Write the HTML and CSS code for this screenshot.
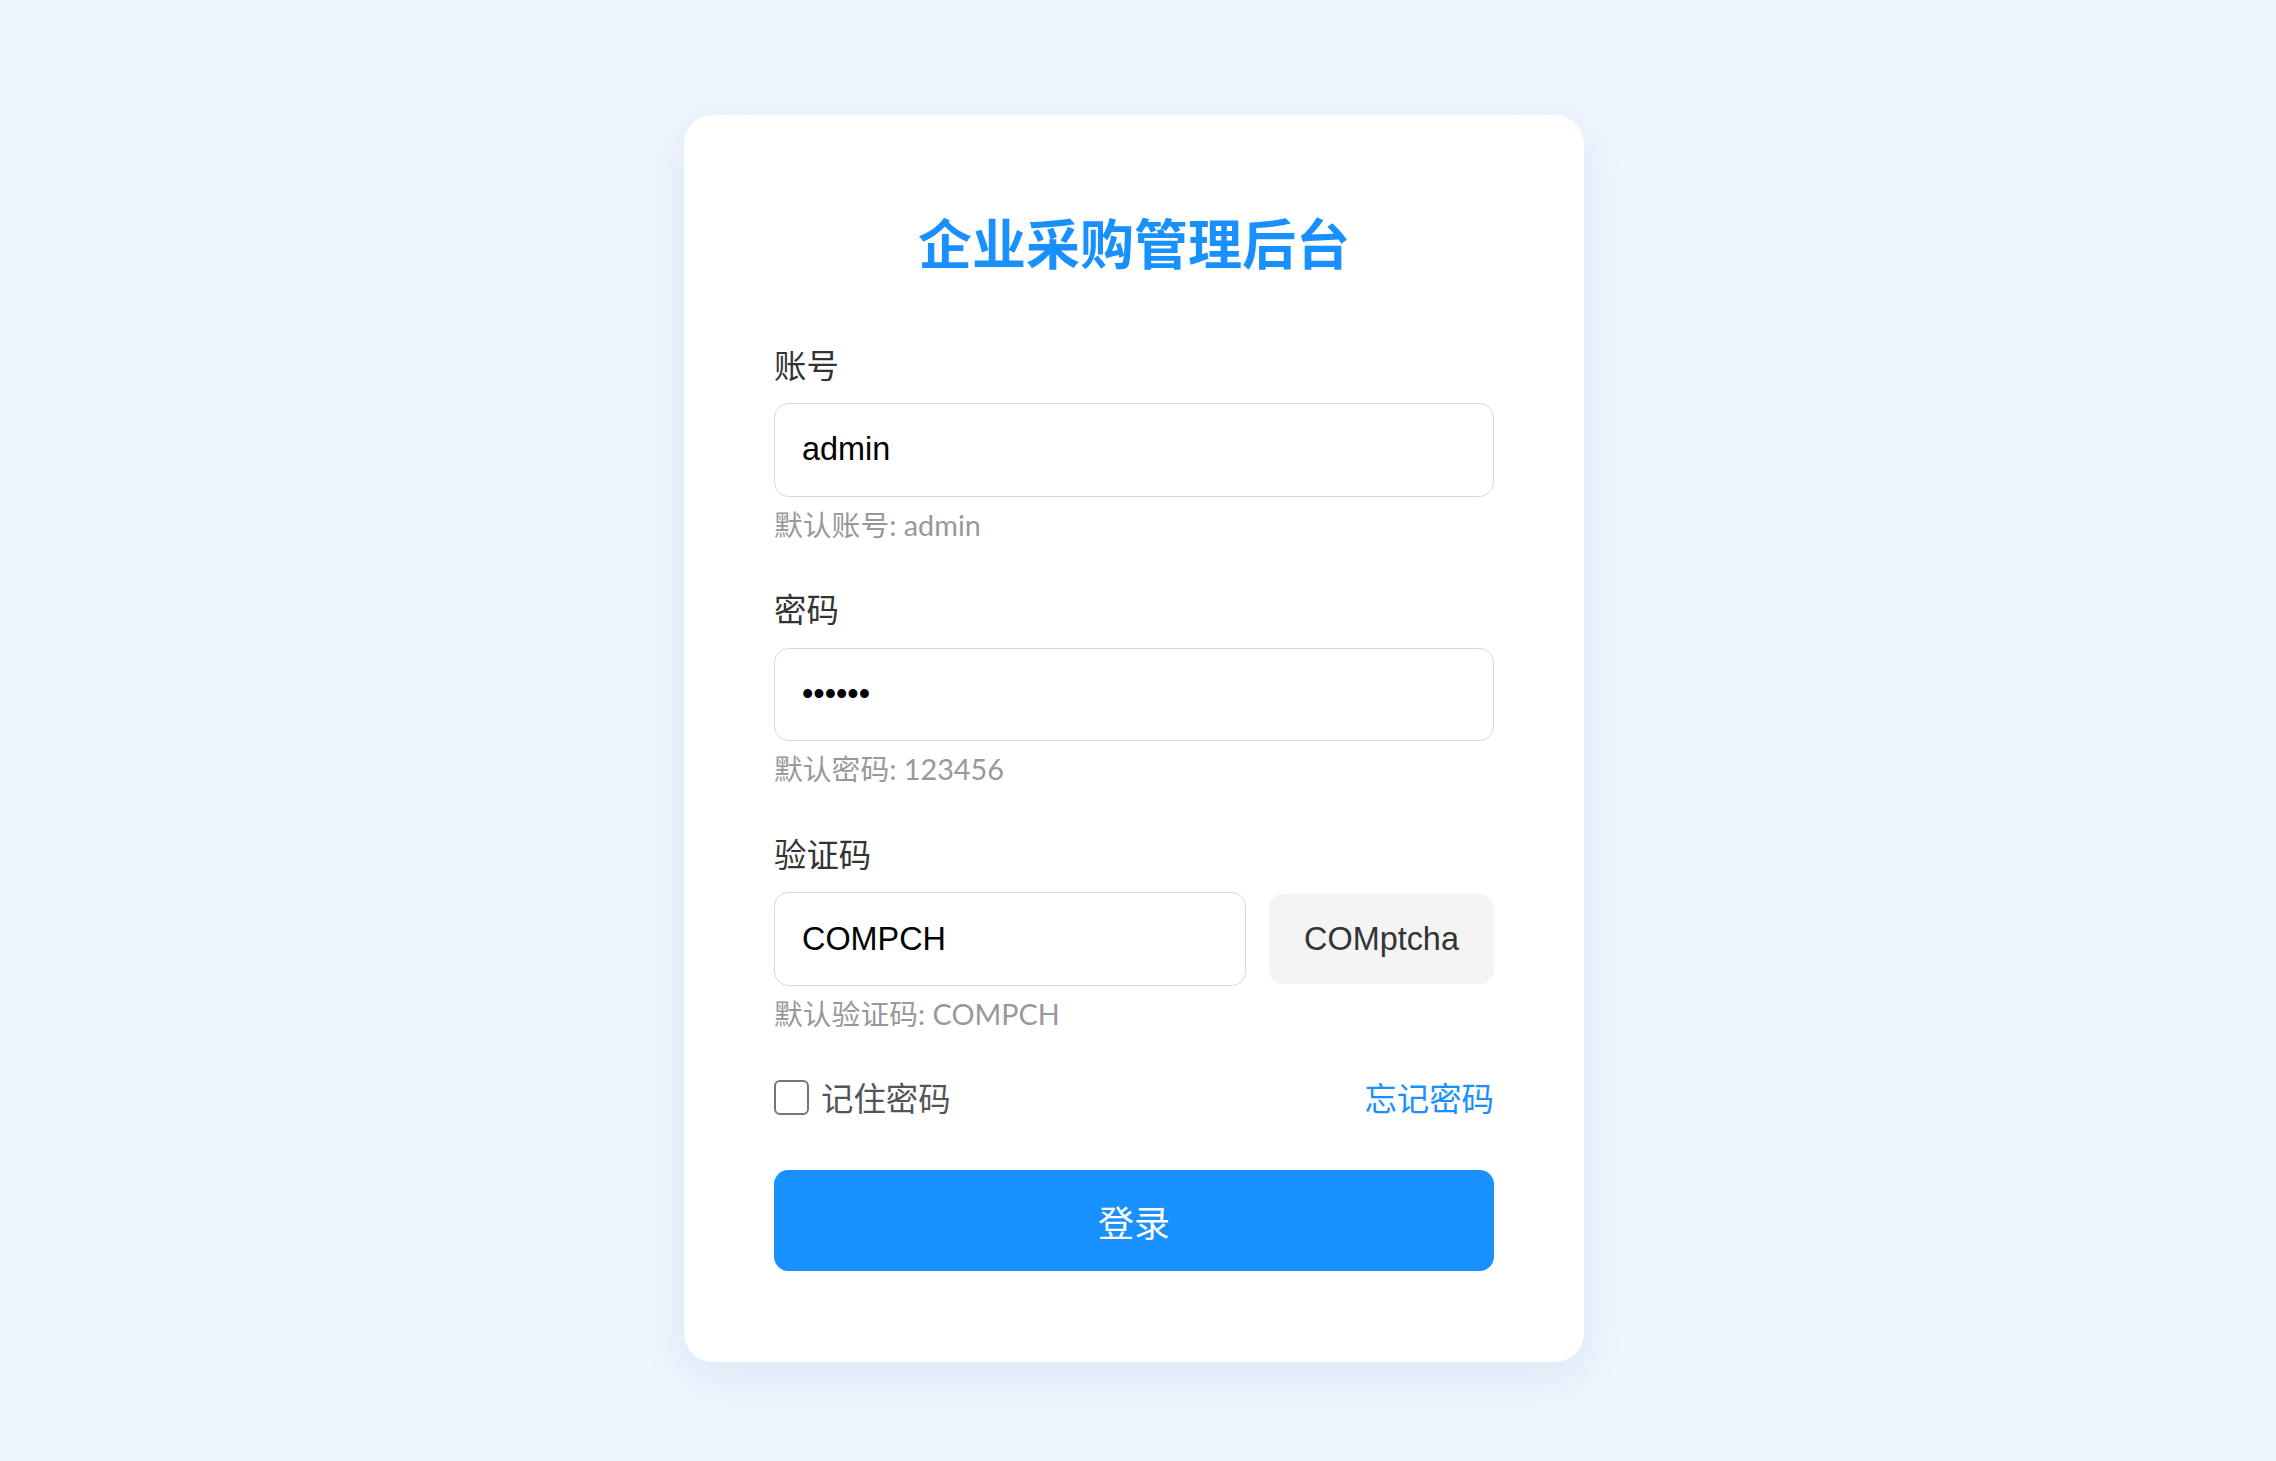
FILE: index.html
```html
<!DOCTYPE html>
<html lang="zh-CN">
<head>
<meta charset="utf-8">
<title>企业采购管理后台</title>
<link rel="stylesheet" href="styles.css">
</head>
<body>
<div class="page">
  <form class="card">
    <h1 class="title">企业采购管理后台</h1>

    <div class="group">
      <label class="label">账号</label>
      <input class="input" type="text" value="admin">
      <div class="hint">默认账号: admin</div>
    </div>

    <div class="group">
      <label class="label">密码</label>
      <input class="input" type="password" value="123456">
      <div class="hint">默认密码: 123456</div>
    </div>

    <div class="group">
      <label class="label">验证码</label>
      <div class="captcha-row">
        <input class="input captcha-input" type="text" value="COMPCH">
        <div class="captcha-btn">COMptcha</div>
      </div>
      <div class="hint">默认验证码: COMPCH</div>
    </div>

    <div class="options">
      <label class="remember"><span class="checkbox"></span><span>记住密码</span></label>
      <a class="forgot">忘记密码</a>
    </div>

    <button class="login" type="button">登录</button>
  </form>
</div>
</body>
</html>
```

FILE: styles.css
```css
html, body {
  margin: 0;
  padding: 0;
}

body {
  background: #eef6fe;
  font-family: "Noto Sans CJK SC", "Noto Sans", sans-serif;
}

.page {
  min-height: 1461px;
  box-sizing: border-box;
  display: flex;
  justify-content: center;
  align-items: flex-start;
  padding-top: 115px;
  padding-right: 8px;
}

.card {
  width: 900px;
  box-sizing: border-box;
  padding: 90px 90px 91px;
  background: #ffffff;
  border-radius: 29px;
  box-shadow: 0 14px 46px rgba(40, 80, 140, 0.09);
}

.title {
  margin: 0 0 60.5px;
  font-size: 54px;
  line-height: 74px;
  font-weight: 700;
  color: #1890ff;
  text-align: center;
}

.group {
  margin-bottom: 37px;
}

.label {
  display: block;
  font-size: 32.4px;
  line-height: 48.6px;
  color: #333333;
  margin-bottom: 15px;
}

.input {
  display: block;
  width: 100%;
  height: 93.6px;
  box-sizing: border-box;
  border: 1.8px solid #d9d9d9;
  border-radius: 14.4px;
  padding: 0 27px;
  font-family: "Liberation Sans", Arial, "Noto Sans CJK SC", sans-serif;
  font-size: 32.4px;
  color: #000000;
  background: #ffffff;
  outline: none;
}

.hint {
  margin-top: 7.2px;
  font-family: Lato, "Noto Sans CJK SC", sans-serif;
  font-size: 28.8px;
  line-height: 43.2px;
  color: #999999;
}

.captcha-row {
  display: flex;
  align-items: center;
  gap: 23px;
}

.captcha-input {
  flex: 1;
  width: auto;
  min-width: 0;
}

.captcha-btn {
  flex: 0 0 225px;
  height: 90px;
  display: flex;
  align-items: center;
  justify-content: center;
  background: #f4f4f4;
  border-radius: 14.4px;
  font-family: "Liberation Sans", Arial, sans-serif;
  font-size: 32.4px;
  color: #333333;
}

.options {
  display: flex;
  align-items: center;
  justify-content: space-between;
  line-height: 48.6px;
  font-size: 32.4px;
  margin-bottom: 48.6px;
}

.remember {
  display: flex;
  align-items: center;
  gap: 12px;
  color: #555555;
}

.checkbox {
  width: 35px;
  height: 35px;
  box-sizing: border-box;
  border: 2.6px solid #767676;
  border-radius: 6px;
  background: #ffffff;
}

.forgot {
  color: #1890ff;
  text-decoration: none;
}

.login {
  display: block;
  width: 100%;
  height: 100.8px;
  border: none;
  border-radius: 14.4px;
  background: #1890ff;
  color: #ffffff;
  font-family: "Noto Sans CJK SC", sans-serif;
  font-size: 36px;
  cursor: pointer;
}
```
